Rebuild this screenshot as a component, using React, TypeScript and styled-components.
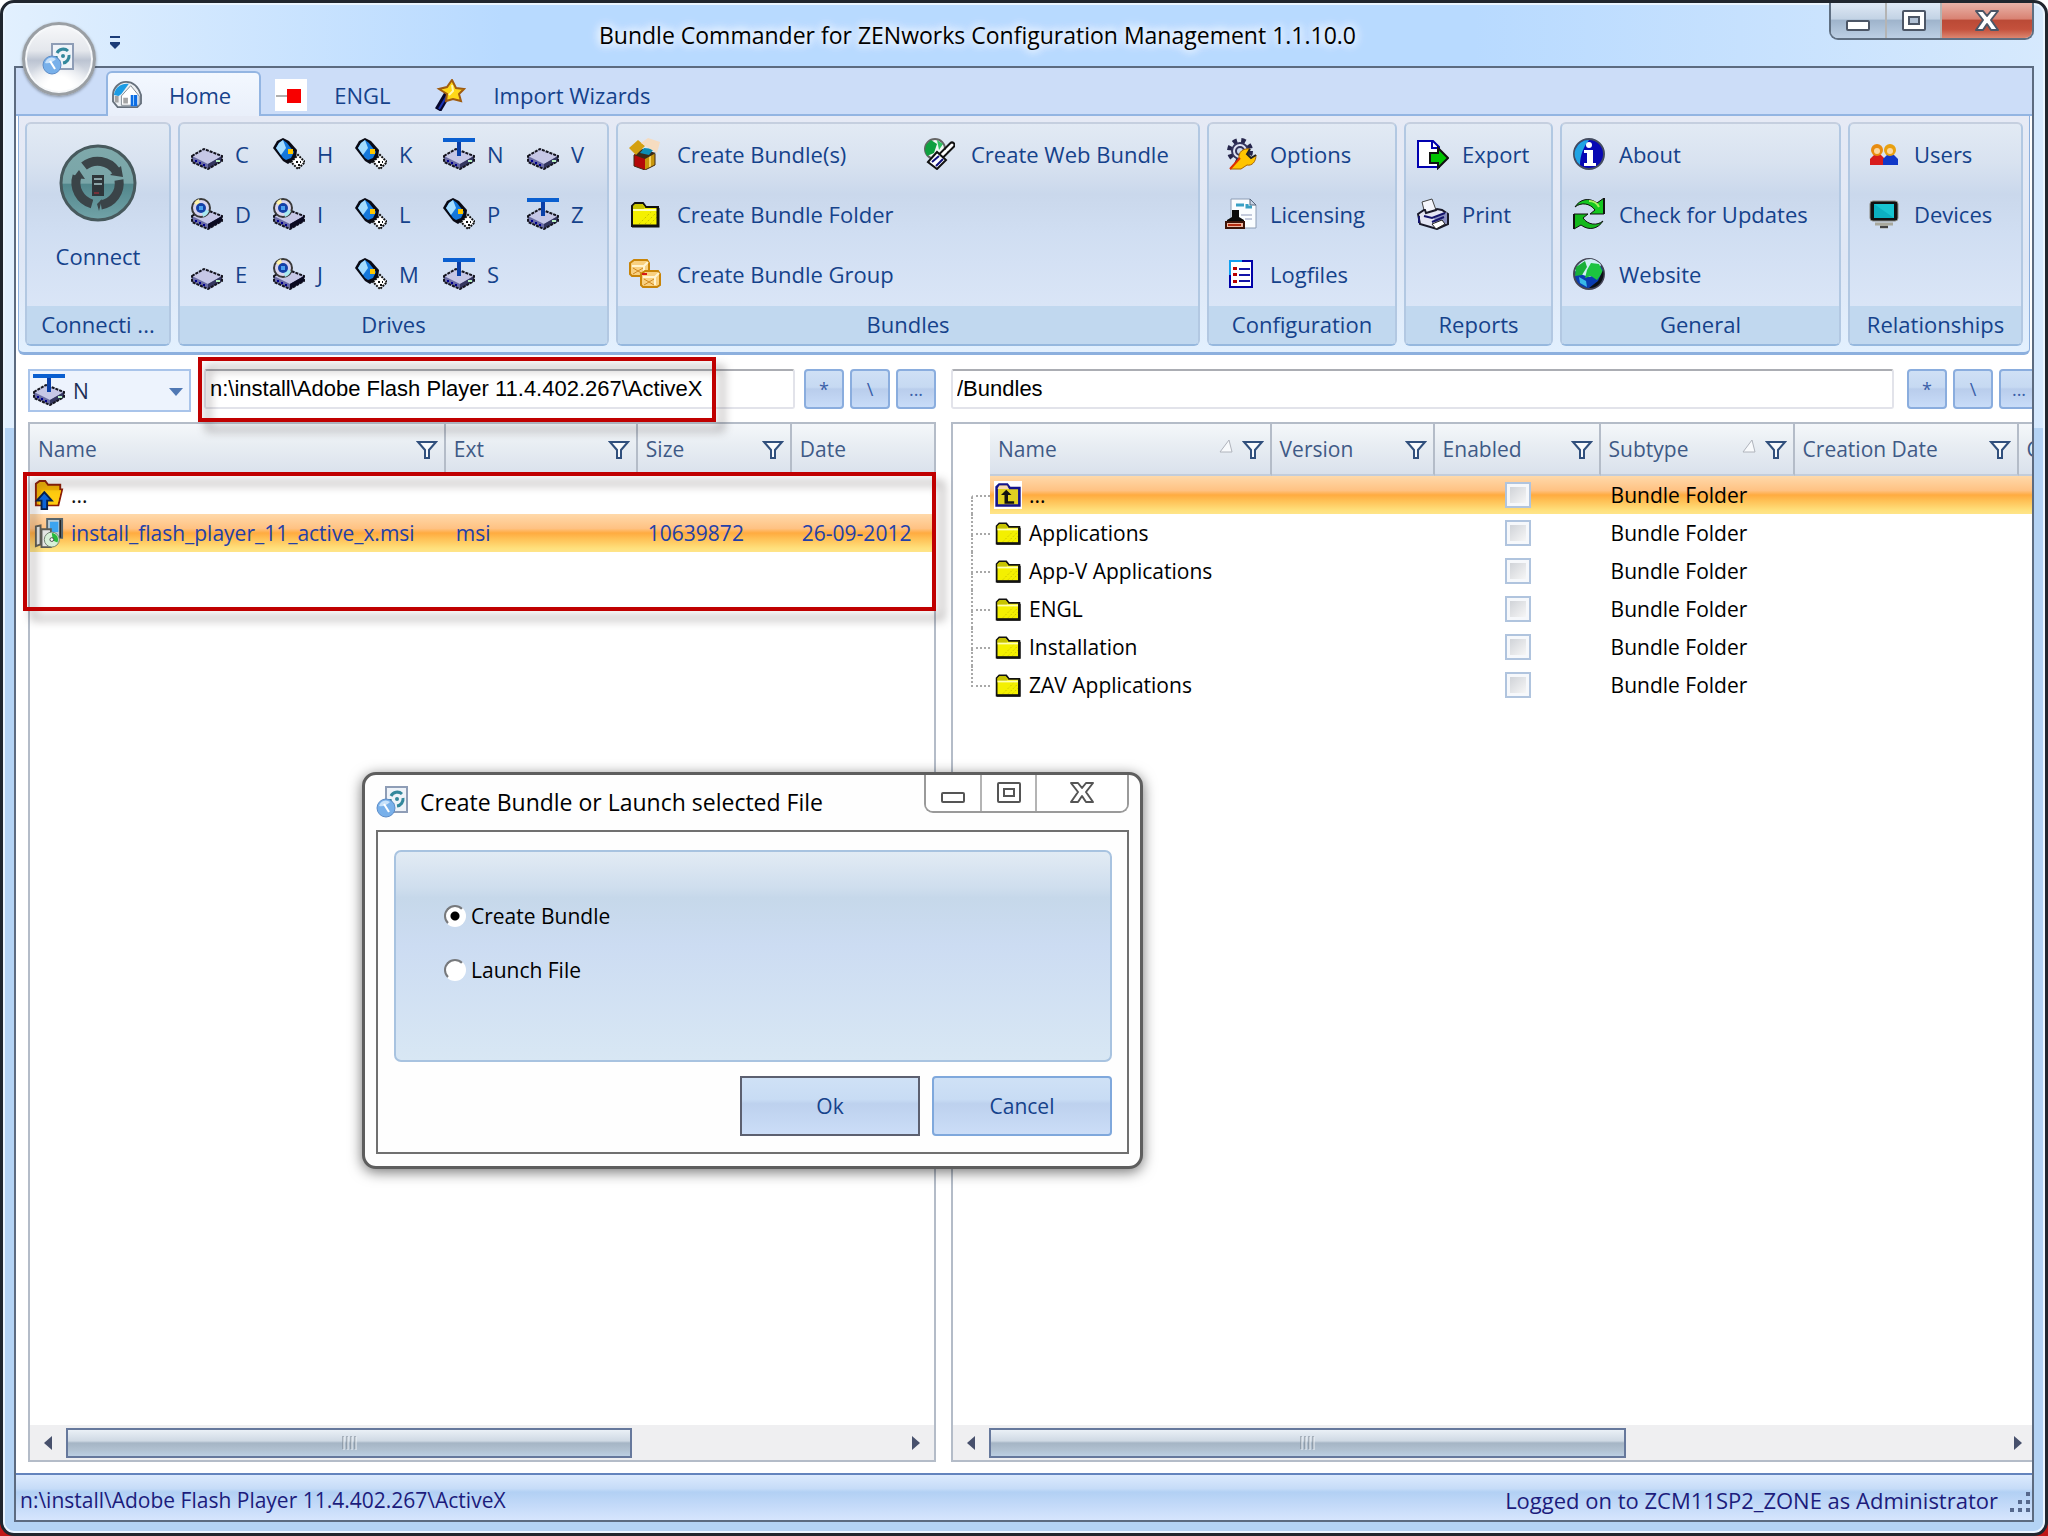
import React from "react";
import styled, { createGlobalStyle, css } from "styled-components";

const INK = "#15428b";
const LINE = "#b4bcc8";

const Global = createGlobalStyle`
  * { box-sizing: border-box; }
  html, body, #root { height: 100%; }
  body {
    margin: 0;
    background: linear-gradient(#ffffff 50%, #c01818 50%);
    font-family: "Open Sans", "Noto Sans", sans-serif;
    font-size: 21px;
    line-height: 28px;
    color: #000;
  }
  button, input, select { font: inherit; color: inherit; margin: 0; }
  button { padding: 0; border: 0; background: none; }
  svg { display: block; flex: none; }
`;

/* ---------- window frame ---------- */

const Frame = styled.div`
  position: relative;
  height: 100vh;
  min-height: 1200px;
  display: flex;
  flex-direction: column;
  padding: 0 11px 11px;
  border: 3px solid #20262e;
  border-radius: 14px;
  overflow: hidden;
  background: linear-gradient(90deg, #e2f0fe 0, #b8daff 500px, #b8daff 72%, #d6e9fd 100%) top / 100% 425px no-repeat, #b4d3f4;
  box-shadow: inset 0 0 0 2px #eaf5ff;
`;

const TitleBar = styled.header`
  height: 63px;
  flex: none;
  display: flex;
  align-items: flex-start;
  padding-left: 94px;
`;

const QuickAccess = styled.button`
  margin-top: 31px;
  height: 16px;
`;

const Title = styled.h1`
  flex: 1;
  margin: 0;
  padding: 16px 0 0 4px;
  text-align: center;
  font-size: 23px;
  font-weight: 400;
  line-height: 32px;
  text-shadow: 0 0 10px #fff, 0 0 10px #fff, 0 0 14px #fff;
  white-space: nowrap;
`;

const Orb = styled.button`
  position: absolute;
  left: 19px;
  top: 19px;
  width: 74px;
  height: 74px;
  border-radius: 50%;
  border: 3px solid #9a9fa4;
  box-shadow: inset 0 0 0 2px #f6f8fa, 0 1px 3px rgba(0, 0, 0, 0.35);
  background: radial-gradient(circle at 50% 95%, #fff 0, #fff 18%, transparent 45%),
    linear-gradient(#f7f8fa 0, #e4e7ec 38%, #bcc4d2 52%, #dfe3ea 75%, #fff 100%);
  display: grid;
  place-items: center;
`;

const Controls = styled.div<{ $light?: boolean }>`
  display: flex;
  height: ${(p) => (p.$light ? 38 : 37)}px;
  border: 2px solid ${(p) => (p.$light ? "#9a9a9a" : "#5f6f82")};
  border-top: 0;
  border-radius: 0 0 9px 9px;
  overflow: hidden;
`;

const ControlButton = styled.button<{ $kind?: "close" | "plain"; $w: number }>`
  width: ${(p) => p.$w}px;
  display: grid;
  place-items: center;
  background: ${(p) =>
    p.$kind === "close"
      ? "linear-gradient(#e9b3a8 0, #d98374 45%, #bb4a36 50%, #c4513c 75%, #dc8670 100%)"
      : p.$kind === "plain"
        ? "#fff"
        : "linear-gradient(#dfe9f5 0, #c3d3e5 45%, #9fb4cc 50%, #bccfe4 100%)"};
  & + & { border-left: 2px solid ${(p) => (p.$kind === "plain" ? "#b4b4b4" : "#76879c")}; }
`;

const Client = styled.div`
  flex: 1;
  min-height: 0;
  display: flex;
  flex-direction: column;
  border: 2px solid #5c6b80;
  background: #fff;
  overflow: hidden;
`;

/* ---------- ribbon ---------- */

const Tabs = styled.nav`
  height: 48px;
  flex: none;
  display: flex;
  align-items: flex-end;
  padding-left: 90px;
  background: #ccddf8;
  box-shadow: inset 0 -2px #93b5e2;
`;

const Tab = styled.button<{ $active?: boolean }>`
  height: 45px;
  display: flex;
  align-items: center;
  gap: 27px;
  padding: 0 28px 0 4px;
  margin-right: 8px;
  font-size: 22px;
  color: ${INK};
  border: 2px solid transparent;
  border-bottom: 0;
  border-radius: 6px 6px 0 0;
  ${(p) =>
    p.$active &&
    css`
      background: linear-gradient(#f3f8ff, #e9effa);
      border-color: #93b5e2;
    `}
`;

const Ribbon = styled.section`
  flex: none;
  display: flex;
  gap: 7px;
  padding: 6px 6px 6px;
  margin: 0 2px;
  border: solid #8db0de;
  border-width: 0 1px 3px;
  border-radius: 0 0 6px 6px;
  background: linear-gradient(#e6eaf5, #dfe7f5 60%, #e2f0fe);
`;

const Group = styled.section<{ $grow: number }>`
  flex: ${(p) => `${p.$grow} 1 ${p.$grow}px`};
  min-width: 0;
  display: flex;
  flex-direction: column;
  border: 2px solid #b2c8e2;
  border-top-color: #c5cfdf;
  border-bottom-color: #96b8de;
  border-radius: 6px;
  overflow: hidden;
  background: linear-gradient(#e2eaf4 0, #d8e2f0 18%, #cad8ec 32%, #d0def2 50%, #dfe9f9 100%);
`;

const GroupBody = styled.div<{ $cols: string; $pad: number }>`
  display: grid;
  grid-template-rows: repeat(3, 60px);
  grid-template-columns: ${(p) => p.$cols};
  grid-auto-flow: column;
  padding: 0 0 2px ${(p) => p.$pad}px;
`;

const GroupLabel = styled.h2`
  margin: 0;
  height: 38px;
  background: #c1d8ef;
  color: ${INK};
  text-align: center;
  font-size: 22px;
  font-weight: 400;
  line-height: 36px;
  white-space: nowrap;
`;

const Action = styled.button<{ $gap: number }>`
  display: flex;
  align-items: center;
  gap: ${(p) => p.$gap}px;
  color: ${INK};
  font-size: 22px;
  line-height: 30px;
  white-space: nowrap;
`;

const ConnectAction = styled.button`
  height: 182px;
  display: flex;
  flex-direction: column;
  align-items: center;
  gap: 18px;
  padding-top: 20px;
  color: ${INK};
  font-size: 22px;
  line-height: 32px;
`;

/* ---------- panes ---------- */

const Panes = styled.main`
  flex: 1;
  min-height: 0;
  display: flex;
  gap: 15px;
  padding: 0 0 11px 12px;
`;

const Pane = styled.section<{ $grow: number }>`
  position: relative;
  flex: ${(p) => p.$grow} 1 0;
  min-width: 0;
  display: flex;
  flex-direction: column;
`;

const ClippedPane = styled(Pane)`
  overflow: hidden;
`;

const AddressBar = styled.div<{ $overrun?: boolean }>`
  height: 67px;
  flex: none;
  display: flex;
  align-items: flex-start;
  padding-top: 14px;
  margin-right: ${(p) => (p.$overrun ? -7 : 0)}px;
`;

const DriveBox = styled.label`
  position: relative;
  width: 163px;
  height: 43px;
  margin-right: 13px;
  svg { position: absolute; top: 5px; left: 5px; pointer-events: none; }
  svg + svg { left: auto; right: 7px; top: 15px; }
`;

const DriveSelect = styled.select`
  width: 100%;
  height: 100%;
  appearance: none;
  border: 2px solid #a9c4ea;
  background: #edf3fd;
  padding: 0 0 0 43px;
  color: #1e2f56;
`;

const Address = styled.input`
  flex: 1;
  min-width: 0;
  height: 40px;
  padding: 0 4px;
  border: 2px solid #e2e3ea;
  border-top-color: #abadb3;
  border-radius: 3px;
  background: #fff;
  font-family: "Liberation Sans", Arial, sans-serif;
  font-size: 22px;
`;

const PathButtons = styled.div<{ $before: number }>`
  display: flex;
  gap: 6px;
  margin-left: ${(p) => p.$before}px;
`;

const PathButton = styled.button`
  width: 40px;
  height: 40px;
  flex: none;
  border: 2px solid #8aadde;
  border-radius: 4px;
  background: linear-gradient(#cfe0f5 0, #c6d9f2 45%, #b9cdec 50%, #c8dcf8 100%);
  color: #3a5fa8;
  font-size: 18px;
  line-height: 28px;
`;

const GridArea = styled.div<{ $overrun?: boolean }>`
  flex: 1;
  min-height: 0;
  display: flex;
  flex-direction: column;
  border: 2px solid ${LINE};
  margin-right: ${(p) => (p.$overrun ? -6 : 0)}px;
`;

const TableWrap = styled.div`
  flex: 1;
  min-height: 0;
  overflow: hidden;
`;

const Table = styled.table`
  width: 100%;
  table-layout: fixed;
  border-collapse: separate;
  border-spacing: 0;
`;

const Th = styled.th<{ $blank?: boolean }>`
  height: 52px;
  padding: 0 6px 0 8px;
  font-weight: 400;
  text-align: left;
  white-space: nowrap;
  overflow: hidden;
  color: #3f5a86;
  ${(p) =>
    !p.$blank &&
    css`
      background: linear-gradient(#f4f7fa 0, #e9eef3 40%, #dae1ec 100%);
      border-right: 2px solid ${LINE};
      border-bottom: 2px solid #c3cddb;
    `}
  &:last-child { border-right: 0; }
`;

const ThInner = styled.span`
  display: flex;
  align-items: center;
  gap: 8px;
  height: 28px;
  line-height: 28px;
`;

const Spacer = styled.span`
  flex: 1;
`;

const Row = styled.tr<{ $selected?: boolean; $ink: string }>`
  color: ${(p) => p.$ink};
  td { height: 38px; }
  ${(p) =>
    p.$selected &&
    css`
      td:not([data-tree]) {
        background: linear-gradient(#ffd9aa 0, #ffc283 38%, #ffab40 50%, #ffc055 65%, #ffe07c 90%, #ffe58a 100%);
      }
    `}
`;

const Td = styled.td`
  padding: 0 10px;
  white-space: nowrap;
`;

const NameTd = styled(Td)`
  padding: 0 0 0 4px;
`;

const NameCell = styled.span`
  display: flex;
  align-items: center;
  gap: 7px;
`;

const TreeTd = styled.td`
  padding: 0 0 0 18px;
`;

const Branch = styled.span<{ $first?: boolean; $last?: boolean }>`
  display: grid;
  grid-template-rows: 21px 17px;
  &::before {
    content: "";
    border-bottom: 2px dotted #a8a8a8;
    border-left: 2px dotted ${(p) => (p.$first ? "transparent" : "#a8a8a8")};
  }
  &::after {
    content: "";
    border-left: 2px dotted ${(p) => (p.$last ? "transparent" : "#a8a8a8")};
  }
`;

const Check = styled.input`
  appearance: none;
  display: block;
  width: 26px;
  height: 26px;
  margin: 0 auto;
  border: 2px solid #b0c4de;
  background: linear-gradient(135deg, #d0d3d8, #f6f6f6) content-box, #f6f8fb;
  padding: 3px;
`;

const ScrollRow = styled.div`
  height: 35px;
  flex: none;
  display: flex;
  align-items: center;
  background: #efeff1;
`;

const ScrollArrow = styled.button`
  width: 36px;
  height: 100%;
  flex: none;
  display: grid;
  place-items: center;
`;

const Track = styled.div`
  flex: 1;
`;

const Thumb = styled.div`
  height: 30px;
  display: grid;
  place-items: center;
  border: 2px solid #66789c;
  background: linear-gradient(#eaf0f6 0, #cfd9e4 42%, #a5b5c5 50%, #b0c0d0 75%, #bccfe2 100%);
`;

const StatusBar = styled.footer`
  height: 47px;
  flex: none;
  display: flex;
  align-items: center;
  justify-content: space-between;
  padding: 4px 2px 0 4px;
  border-top: 2px solid #6484bd;
  background: linear-gradient(#dceafd 0, #c6dcf8 30%, #b2d0f4 38%, #c2d9f8 65%, #d6e5fd 100%);
  color: #1c1c7c;
`;

const StatusEnd = styled.span`
  display: flex;
  align-items: flex-end;
  gap: 12px;
  font-size: 22px;
`;

const Callout = styled.div<{ $l: number; $t: number; $r?: number; $w?: number; $h: number }>`
  position: absolute;
  z-index: 2;
  left: ${(p) => p.$l}px;
  top: ${(p) => p.$t}px;
  ${(p) => (p.$w ? `width: ${p.$w}px;` : `right: ${p.$r}px;`)}
  height: ${(p) => p.$h}px;
  border: 4px solid #c00000;
  filter: drop-shadow(8px 9px 5px rgba(60, 50, 50, 0.45));
  pointer-events: none;
`;

/* ---------- dialog ---------- */

const Dialog = styled.form`
  position: absolute;
  left: 359px;
  top: 769px;
  width: 781px;
  z-index: 3;
  padding: 0 11px 12px;
  border: 3px solid #5e5e5e;
  border-radius: 14px;
  background: #fefefe;
  box-shadow: 0 3px 14px rgba(0, 0, 0, 0.55);
`;

const DialogHead = styled.div`
  height: 55px;
  display: flex;
  align-items: flex-start;
`;

const DialogTitle = styled.h2`
  flex: 1;
  margin: 0;
  padding-top: 10px;
  display: flex;
  align-items: center;
  gap: 10px;
  font-size: 23px;
  font-weight: 400;
  line-height: 32px;
`;

const DialogBody = styled.div`
  border: 2px solid #707070;
  padding: 18px 15px 16px 16px;
`;

const Choices = styled.fieldset`
  margin: 0;
  height: 212px;
  padding: 48px 0 0 48px;
  display: flex;
  flex-direction: column;
  gap: 22px;
  border: 2px solid #a8c3e0;
  border-radius: 7px;
  background: linear-gradient(#e2ebf4 0, #cfdeee 17%, #c6d8ea 22%, #ccdcf2 45%, #d8e7f4 100%);
`;

const Choice = styled.label`
  display: flex;
  align-items: center;
  gap: 5px;
  height: 32px;
  line-height: 32px;
`;

const Radio = styled.input`
  appearance: none;
  width: 22px;
  height: 22px;
  border-radius: 50%;
  border: 2px solid;
  border-color: #77797c #fff #fff #77797c;
  background: #fff;
  &:checked { background: radial-gradient(circle, #000 0 4px, #fff 5px); }
`;

const DialogActions = styled.div`
  display: flex;
  justify-content: flex-end;
  gap: 12px;
  padding-top: 14px;
`;

const DialogButton = styled.button<{ $default?: boolean }>`
  width: 180px;
  height: 60px;
  border: 2px solid ${(p) => (p.$default ? "#5c6070" : "#7fa8dc")};
  border-radius: ${(p) => (p.$default ? 0 : 4)}px;
  background: linear-gradient(#cfe1f6 0, #c8dcf4 38%, #bdd1ee 46%, #cbddf7 100%);
  color: ${INK};
`;

/* ---------- icons ---------- */

type IconProps = { size?: number };

const Svg = ({ size = 32, children }: IconProps & { children: React.ReactNode }) => (
  <svg width={size} height={size} viewBox="0 0 32 32" aria-hidden="true">
    {children}
  </svg>
);

const DiskShape = () => (
  <g>
    <path d="M1 18 13 11 31 18v5L17 31 1 24z" fill="#6a6ca4" />
    <path d="M1 18 13 11 31 18 17 26z" fill="#c6c7e6" />
    <path d="M17 26 31 18v5l-14 8z" fill="#34365e" />
    <path d="M1 18 13 11 31 18v5L17 31 1 24z" fill="none" stroke="#15151f" strokeWidth="2" strokeDasharray="3 1" />
    <path d="M5 22v2M9 24v2M13 26v2" stroke="#00008c" strokeWidth="2" />
    <path d="M25 23h4" stroke="#b8f0c0" strokeWidth="2" />
  </g>
);

const HardDisk = () => (
  <Svg>
    <DiskShape />
  </Svg>
);

const NetDrive = () => (
  <Svg>
    <DiskShape />
    <path d="M0 2h32" stroke="#0a5fd0" strokeWidth="4" />
    <path d="M16 4v14" stroke="#0a3fa8" strokeWidth="4" />
  </Svg>
);

const CdDrive = () => (
  <Svg>
    <DiskShape />
    <path d="m17 26 14-8v5l-14 8z" fill="#0a0a20" />
    <circle cx="10" cy="10" r="9" fill="#d8d4ee" stroke="#3a3a3a" strokeWidth="2" />
    <path d="M10 10 3 5a9 9 0 0 1 5-4z" fill="#fff3a8" />
    <path d="m10 10 8 3a9 9 0 0 1-6 6z" fill="#a8e8f0" />
    <circle cx="10" cy="10" r="5" fill="#1440a8" />
    <path d="M8 8h4v4H8z" fill="#4aa0f0" />
  </Svg>
);

const UsbDrive = () => (
  <Svg>
    <path d="M0 10 4 3l6-3 6 3 8 9-1 8-8 6-5-3z" fill="#0a0a14" />
    <path d="M3 10 6 5l4-3 4 3 7 9-3 6-5 2-3-2z" fill="#1478dc" />
    <path d="M3 10 6 5l4-3 3 8-5 7z" fill="#a4dcff" />
    <path d="M15 11h5v5h-5z" fill="#ffc800" />
    <path d="m18 24 7-7 7 7-7 7z" fill="#fff" stroke="#111" strokeWidth="2" strokeDasharray="2 1" />
    <path d="M23 24h2m2 0h1m-3 3h2" stroke="#111" strokeWidth="2" />
  </Svg>
);

const BoxOpen = () => (
  <Svg>
    <path d="M5 16v12l11 4V20z" fill="#b40808" />
    <path d="m16 20 10-5v12l-10 5z" fill="#c8960c" />
    <path d="M21 18v11" stroke="#f4d060" strokeWidth="2" />
    <path d="m5 17 8-6 14 4-11 6z" fill="#3a2a18" />
    <path d="m11 15 4-5 10 1-5 6z" fill="#0c8cb4" />
    <path d="M0 10 9 2l7 6-9 9z" fill="#d4a010" />
    <path d="m12 5 7-5 12 4-3 11-10-6z" fill="#f6dcc0" />
    <path d="M5 17v11l11 4 10-5V16" fill="none" stroke="#442a10" strokeWidth="1" />
  </Svg>
);

const Folder = ({ size = 32 }: IconProps) => (
  <Svg size={size}>
    <path d="M3 28V8l3-3h8l3 4h12v19z" fill="#f4f000" stroke="#111" strokeWidth="2" />
    <path d="M4 8l2-2h7l3 3-2 3H4z" fill="#c8c400" />
    <path d="M4 12h24" stroke="#ffffb0" strokeWidth="2" />
    <path d="m10 26 12-12m-6 12 12-12m-7 12 7-7" stroke="#c8c000" strokeWidth="1" strokeDasharray="2 2" />
    <path d="M29 10v18H3" fill="none" stroke="#111" strokeWidth="3" />
  </Svg>
);

const Parcels = () => (
  <Svg>
    {[0, 1].map((i) => (
      <g key={i} transform={`translate(${i * 11} ${i * 11})`}>
        <path d="m1 5 4-3h13l2 3v11l-3 2H3l-2-2z" fill="#f8d080" stroke="#c88408" strokeWidth="2" />
        <path d="M3 8h12l4-4M15 8v8" fill="none" stroke="#fff4d0" strokeWidth="2" />
        <path d="m4 10 10 6m0-6L4 16" stroke="#d08820" strokeWidth="1" />
      </g>
    ))}
    <path d="M13 16h5" stroke="#d81818" strokeWidth="2" />
  </Svg>
);

const WebPen = () => (
  <Svg>
    <circle cx="12" cy="11" r="10" fill="#f2f8f4" stroke="#666" strokeWidth="2" />
    <path d="m3 7 5-5 6 4-3 9-7 3-2-5z" fill="#10a040" />
    <path d="m14 2 6 4-4 6z" fill="#30c060" />
    <path d="M29 7 15 21" stroke="#111" strokeWidth="7" strokeLinecap="round" />
    <path d="M29 7 15 21" stroke="#fff" strokeWidth="3" strokeLinecap="round" strokeDasharray="7 2" />
    <path d="m5 24 9-10 9 8-9 9z" fill="#fff" stroke="#111" strokeWidth="2" />
    <path d="m9 24 7-6M13 28l7-7" stroke="#10107c" strokeWidth="2" />
  </Svg>
);

const Gear = () => (
  <Svg>
    <circle cx="15" cy="13" r="10" fill="none" stroke="#26264c" strokeWidth="6" strokeDasharray="4 4" />
    <circle cx="15" cy="13" r="8" fill="#dfe3f4" stroke="#34345c" strokeWidth="2" />
    <circle cx="15" cy="13" r="4" fill="#cdd9ea" stroke="#34345c" strokeWidth="2" />
    <path d="m5 31 9-10c-1-7 4-11 11-10l-3 5 4 4 5-3c0 7-4 11-9 10l-6 4z" fill="#ffc400" stroke="#a86400" strokeWidth="1" />
    <path d="m5 31 10-11" stroke="#e03000" strokeWidth="2" />
    <path d="M25 11l-3 5 4 4 5-3" fill="none" stroke="#222" strokeWidth="2" />
  </Svg>
);

const License = () => (
  <Svg>
    <path d="M6 1h19l6 6v23H6z" fill="#fafdff" stroke="#8c9cb4" strokeWidth="1" />
    <path d="M25 1v6h6z" fill="#c8d4e4" stroke="#55657c" strokeWidth="1" />
    <path d="M11 7h8M22 6v3h5" fill="none" stroke="#38a0c4" strokeWidth="3" />
    <path d="M16 17h11M20 21h7" stroke="#8c98b8" strokeWidth="1" />
    <path d="M7 12h7v7l5 3v2H2v-2l5-3z" fill="#0a0a0a" />
    <path d="M1 24h18v6H1z" fill="#f0b8a0" stroke="#3c1408" strokeWidth="2" />
    <path d="M3 27h13" stroke="#b42c10" strokeWidth="2" />
  </Svg>
);

const LogList = () => (
  <Svg>
    <path d="M5 3h22v26H5z" fill="#fff" stroke="#0000a8" strokeWidth="2" />
    <path d="M5 17V3h12" fill="none" stroke="#10a0f0" strokeWidth="2" />
    <path d="M8 9h4v3H8zM8 15h4v3H8zM8 22h4v3H8z" fill="#b80000" />
    <path d="M14 11h11M14 17h11M14 23h11" stroke="#1414a8" strokeWidth="2" />
  </Svg>
);

const ExportIcon = () => (
  <Svg>
    <path d="M1 3h15l6 6v20H1z" fill="#fff" stroke="#0000b0" strokeWidth="2" />
    <path d="M15 3v7h7" fill="none" stroke="#0000b0" strokeWidth="2" />
    <path d="M13 15h8v-5l10 10-10 10v-5h-8z" fill="#00c400" stroke="#111" strokeWidth="2" />
  </Svg>
);

const Printer = () => (
  <Svg>
    <path d="M5 4 15 1l4 11-11 4z" fill="#f4f6fc" stroke="#444" strokeWidth="1" />
    <path d="m1 16 6-4h1l1 3 10-3 1-1 5 1 6 4v10l-11 5L3 26z" fill="#e4e6f4" stroke="#1a1a2a" strokeWidth="2" />
    <path d="m17 20 13-6v11l-10 5z" fill="#8a90c0" />
    <path d="M2 18v7M7 18l8 2 13-5M15 24l12-5" stroke="#14146c" strokeWidth="2" fill="none" />
    <path d="m15 26 10-4 3 4-9 5z" fill="#fff" stroke="#222" strokeWidth="1" />
  </Svg>
);

const Info = () => (
  <Svg>
    <circle cx="16" cy="16" r="15" fill="#0808b4" stroke="#444c60" strokeWidth="2" />
    <path d="M16 2a14 14 0 0 0-9 25c0-10 4-19 9-25z" fill="#20a4e4" />
    <circle cx="16" cy="7" r="3" fill="#fff" />
    <path d="M11 12h9v13h3v3H11v-3h3V15h-3z" fill="#fff" />
  </Svg>
);

const Refresh = () => (
  <Svg>
    <path d="M2 9C7 1 16-1 24 5l7-5v16H17l5-4C17 5 8 4 2 9z" fill="#14c820" stroke="#111" strokeWidth="1" />
    <path d="M30 23c-5 8-14 10-22 4l-7 4V16h14l-5 4c5 7 14 8 20 3z" fill="#14b81c" stroke="#111" strokeWidth="1" />
    <path d="M31 0v16M1 31V16" stroke="#111" strokeWidth="2" />
    <path d="M16 3c4 0 8 2 10 6" fill="none" stroke="#a8f060" strokeWidth="2" />
  </Svg>
);

const Globe = () => (
  <Svg>
    <circle cx="16" cy="16" r="15" fill="#0a3cb0" stroke="#445" strokeWidth="2" />
    <path d="M2 13C5 4 12 1 18 1c5 1 9 4 10 6l-6 10-6 2-6-2z" fill="#cfeef4" />
    <path d="M3 9l9-6 2 6-5 8-7 1z" fill="#18b038" />
    <path d="m18 5 8 1 4 8-6 8-6-4-6 2 2-8z" fill="#1cc440" />
    <path d="M30 12c3 10-6 19-14 18l9-7z" fill="#0c1014" />
    <path d="m6 19 7 4 1 6-7-4z" fill="#38b8e8" />
  </Svg>
);

const Users = () => (
  <Svg>
    {[
      { x: 9, hair: "#e88c10", body: "#d81c1c" },
      { x: 22, hair: "#e8a010", body: "#1038c8" },
    ].map(({ x, hair, body }) => (
      <g key={x}>
        <path d={`M${x - 7} 27v-6l4-4h7l4 4v6z`} fill={body} />
        <circle cx={x} cy="12" r="6" fill={hair} />
        <circle cx={x} cy="13" r="3" fill="#fcd8a0" />
      </g>
    ))}
  </Svg>
);

const Monitor = () => (
  <Svg>
    <rect x="2" y="3" width="28" height="20" rx="3" fill="#111" stroke="#8c8c84" strokeWidth="1" />
    <path d="M6 6h20v14H6z" fill="#18c4d0" />
    <path d="m6 6 20 14H6z" fill="#0cb0c0" />
    <path d="M7 26h18M12 29h8" stroke="#a8a89c" strokeWidth="3" />
    <path d="M12 29h8" stroke="#444" strokeWidth="2" />
  </Svg>
);

const House = () => (
  <svg width="30" height="28" viewBox="0 0 32 30" aria-hidden="true">
    <path d="M1 15C1 8 7 1 15 1s13 5 16 14v9l-4 4H6l-5-6z" fill="#eef1f4" stroke="#66707c" strokeWidth="2" />
    <path d="M2 15C3 8 8 2 18 3l-8 11-3 2z" fill="#1c9ce4" />
    <path d="M10 16 20 5l9 11v10H10z" fill="#fff" stroke="#7c848c" strokeWidth="1" />
    <path d="M12 18h5v6h-5zM3 16h4v7H3z" fill="#a4a4a4" />
    <path d="M20 15h7v12h-7z" fill="#0c6ce4" />
    <path d="M23 15v11" stroke="#9cd4ff" strokeWidth="1" />
  </svg>
);

const EnglLogo = () => (
  <svg width="32" height="32" viewBox="0 0 32 32" aria-hidden="true">
    <path d="M0 0h32v32H0z" fill="#fff" />
    <path d="M1 17h12" stroke="#b0b0b0" strokeWidth="2" />
    <path d="M12 10h14v14H12z" fill="#f80000" />
  </svg>
);

const Wand = () => (
  <Svg>
    <path d="M4 31 14 14" stroke="#06062c" strokeWidth="7" />
    <path d="M5 30 14 15" stroke="#1c34b4" strokeWidth="2" />
    <path d="m18 1 4 8 8 1-5 5 2 7-8-2-7 2 1-7-8-5 8-2z" fill="#ffd818" stroke="#a05c10" strokeWidth="2" />
    <path d="m18 6 1 6-4 4" stroke="#fff8b0" strokeWidth="2" fill="none" />
  </Svg>
);

const AppIcon = () => (
  <svg width="34" height="34" viewBox="0 0 34 34" aria-hidden="true">
    <path d="M10 2h21v25H10z" fill="#eef3f9" stroke="#8e9db6" strokeWidth="2" />
    <path d="M15 11a7 7 0 0 1 11-2M27 13a7 7 0 0 1-6 8M14 14a7 7 0 0 0 4 6" fill="none" stroke="#33889c" strokeWidth="3" />
    <circle cx="21" cy="14" r="2" fill="#33889c" />
    <circle cx="10" cy="23" r="9" fill="#78b0ea" stroke="#5c8cc8" strokeWidth="1" />
    <path d="M3 21a7 7 0 0 1 11-4c-3 3-7 5-11 4z" fill="#c8e2fb" />
    <path d="m8 19 5 8" stroke="#fff" strokeWidth="2" />
  </svg>
);

const ConnectIcon = () => (
  <svg width="78" height="78" viewBox="0 0 78 78" aria-hidden="true">
    <defs>
      <linearGradient id="teal" x1="0" y1="0" x2="0" y2="1">
        <stop offset="0" stopColor="#7fa9ab" />
        <stop offset="0.5" stopColor="#79a5a8" />
        <stop offset="0.52" stopColor="#52878c" />
        <stop offset="1" stopColor="#72a3a8" />
      </linearGradient>
    </defs>
    <circle cx="39" cy="39" r="37" fill="url(#teal)" stroke="#47595d" strokeWidth="3" />
    <g fill="none" stroke="#3a4448" strokeWidth="9">
      <path d="M25 22a22 22 0 0 1 32 5" />
      <path d="M60 36a22 22 0 0 1-18 25" />
      <path d="M18 32a22 22 0 0 0 15 28" />
    </g>
    <path d="m62 22 2 11-13-2zM14 34l6-8 6 9zM43 55l-3 12-2-7z" fill="#3a4448" />
    <path d="M33 31h12v21H33z" fill="#2e363a" />
    <path d="M35 35h8M35 40h8" stroke="#8ba4a8" strokeWidth="2" />
    <path d="M35 49h5" stroke="#74323a" strokeWidth="2" />
  </svg>
);

const FolderUp = () => (
  <Svg size={30}>
    <path d="M2 27V4l4-3h6l3 4h13v5h2l-4 17z" fill="#f4b400" stroke="#8c1c04" strokeWidth="2" />
    <path d="M8 11h21l-4 15H5z" fill="#ffcc10" />
    <path d="m11 13 8 9h-5v9H8v-9H3z" fill="#0c64d8" stroke="#06204c" strokeWidth="2" />
  </Svg>
);

const MsiFile = () => (
  <Svg size={30}>
    <path d="M14 1h16v20H14z" fill="#b8ccd8" stroke="#56646c" strokeWidth="2" />
    <path d="M17 4h9v11h-9z" fill="#3ca4f0" />
    <path d="M28 2v19" stroke="#222" strokeWidth="2" />
    <path d="M2 9l5-1v20l-5 2zM8 12h10v19H8z" fill="#e4e6e4" stroke="#5c5c54" strokeWidth="2" />
    <circle cx="19" cy="23" r="8" fill="#d8f0d8" stroke="#6c7c6c" strokeWidth="1" />
    <path d="M19 16a7 7 0 0 1 6 10l-5-2z" fill="#28b83c" />
    <circle cx="19" cy="23" r="2" fill="#fff" stroke="#444" />
  </Svg>
);

const ParentFolder = () => (
  <Svg size={28}>
    <path d="M0 0h32v32H0z" fill="#fff" />
    <path d="M3 28V7l3-3h9l3 4h11v20z" fill="#e0d020" stroke="#14148c" strokeWidth="3" />
    <path d="M6 5h9l2 4H4z" fill="#f8d8b0" />
    <path d="m14 10 6 6h-4v7h7v3H12V16H8z" fill="#111" />
  </Svg>
);

const Funnel = () => (
  <svg width="22" height="19" viewBox="0 0 22 19" aria-hidden="true">
    <path d="M2 2h18l-7 8v8H9v-8z" fill="#f8fafc" stroke="#304f7c" strokeWidth="2" />
  </svg>
);

const SortMark = () => (
  <svg width="16" height="28" viewBox="0 0 16 28" aria-hidden="true">
    <path d="M2 17 11 5l3 12z" fill="#f8fafc" stroke="#b0b4bc" strokeWidth="1" />
  </svg>
);

const Caret = ({ dir }: { dir: "left" | "right" | "down" }) => (
  <svg width="16" height="16" viewBox="0 0 16 16" aria-hidden="true">
    <path
      d={dir === "left" ? "M12 1v14L4 8z" : dir === "right" ? "M4 1v14l8-7z" : "M1 4h14l-7 8z"}
      fill={dir === "down" ? "#5078b4" : "#47506c"}
    />
  </svg>
);

const WindowGlyphs = ({ light }: { light?: boolean }) => {
  const kind = light ? ("plain" as const) : undefined;
  const edge = light ? "#555" : "#4c5666";
  return (
    <Controls $light={light}>
      <ControlButton type="button" $kind={kind} $w={54} aria-label="Minimize">
        <svg width="26" height="24" viewBox="0 0 26 24">
          <rect x="2" y="12" width="22" height="9" rx="1" fill="#fff" stroke={edge} strokeWidth="2" />
        </svg>
      </ControlButton>
      <ControlButton type="button" $kind={kind} $w={55} aria-label="Maximize">
        <svg width="26" height="24" viewBox="0 0 26 24">
          <rect x="2" y="2" width="22" height="19" rx="1" fill="#fff" stroke={edge} strokeWidth="2" />
          <rect x="8" y="8" width="10" height="7" fill={light ? "#fff" : "#b0c0d4"} stroke={edge} strokeWidth="2" />
        </svg>
      </ControlButton>
      <ControlButton type="button" $kind={light ? "plain" : "close"} $w={92} aria-label="Close">
        <svg width="26" height="24" viewBox="0 0 26 24">
          <path
            d="M2 2h7l4 5 4-5h7l-7 9 7 10h-7l-4-6-4 6H2l7-10z"
            fill="#fff"
            stroke={edge}
            strokeWidth="2"
            strokeLinejoin="round"
          />
        </svg>
      </ControlButton>
    </Controls>
  );
};

/* ---------- data ---------- */

type Item = { icon: React.ReactNode; text: string };
type GroupData = { label: string; grow: number; cols: string; pad: number; gap: number; columns: Item[][] };

const hd = <HardDisk />;
const cd = <CdDrive />;
const usb = <UsbDrive />;
const net = <NetDrive />;

const groups: GroupData[] = [
  {
    label: "Drives",
    grow: 431,
    cols: "82px 82px 88px 84px 1fr",
    pad: 11,
    gap: 12,
    columns: [
      [{ icon: hd, text: "C" }, { icon: cd, text: "D" }, { icon: hd, text: "E" }],
      [{ icon: usb, text: "H" }, { icon: cd, text: "I" }, { icon: cd, text: "J" }],
      [{ icon: usb, text: "K" }, { icon: usb, text: "L" }, { icon: usb, text: "M" }],
      [{ icon: net, text: "N" }, { icon: usb, text: "P" }, { icon: net, text: "S" }],
      [{ icon: hd, text: "V" }, { icon: net, text: "Z" }],
    ],
  },
  {
    label: "Bundles",
    grow: 584,
    cols: "294px 1fr",
    pad: 11,
    gap: 16,
    columns: [
      [
        { icon: <BoxOpen />, text: "Create Bundle(s)" },
        { icon: <Folder />, text: "Create Bundle Folder" },
        { icon: <Parcels />, text: "Create Bundle Group" },
      ],
      [{ icon: <WebPen />, text: "Create Web Bundle" }],
    ],
  },
  {
    label: "Configuration",
    grow: 190,
    cols: "1fr",
    pad: 16,
    gap: 13,
    columns: [
      [
        { icon: <Gear />, text: "Options" },
        { icon: <License />, text: "Licensing" },
        { icon: <LogList />, text: "Logfiles" },
      ],
    ],
  },
  {
    label: "Reports",
    grow: 149,
    cols: "1fr",
    pad: 11,
    gap: 13,
    columns: [[{ icon: <ExportIcon />, text: "Export" }, { icon: <Printer />, text: "Print" }]],
  },
  {
    label: "General",
    grow: 281,
    cols: "1fr",
    pad: 11,
    gap: 14,
    columns: [
      [
        { icon: <Info />, text: "About" },
        { icon: <Refresh />, text: "Check for Updates" },
        { icon: <Globe />, text: "Website" },
      ],
    ],
  },
  {
    label: "Relationships",
    grow: 175,
    cols: "1fr",
    pad: 18,
    gap: 14,
    columns: [[{ icon: <Users />, text: "Users" }, { icon: <Monitor />, text: "Devices" }]],
  },
];

const bundleRows = ["...", "Applications", "App-V Applications", "ENGL", "Installation", "ZAV Applications"];

const RibbonGroup = ({ group }: { group: GroupData }) => (
  <Group $grow={group.grow}>
    <GroupBody $cols={group.cols} $pad={group.pad}>
      {group.columns.map((col, c) =>
        col.map((item, r) => (
          <Action key={item.text} type="button" $gap={group.gap} style={{ gridColumn: c + 1, gridRow: r + 1 }}>
            {item.icon}
            {item.text}
          </Action>
        ))
      )}
    </GroupBody>
    <GroupLabel>{group.label}</GroupLabel>
  </Group>
);

const HeadCell = ({ text, sort, filter = true }: { text: string; sort?: boolean; filter?: boolean }) => (
  <Th scope="col">
    <ThInner>
      {text}
      <Spacer />
      {sort && <SortMark />}
      {filter && <Funnel />}
    </ThInner>
  </Th>
);

const PathTools = ({ before }: { before: number }) => (
  <PathButtons $before={before}>
    <PathButton type="button">*</PathButton>
    <PathButton type="button">\</PathButton>
    <PathButton type="button">...</PathButton>
  </PathButtons>
);

const ScrollBar = ({ percent }: { percent: number }) => (
  <ScrollRow>
    <ScrollArrow type="button" aria-label="Scroll left">
      <Caret dir="left" />
    </ScrollArrow>
    <Track>
      <Thumb style={{ width: `${percent}%` }}>
        <svg width="16" height="14" viewBox="0 0 16 14" aria-hidden="true">
          <path d="M2 0v13M6 0v13M10 0v13M14 0v13" stroke="#75808c" strokeWidth="1" />
          <path d="M3 1v13M7 1v13M11 1v13M15 1v13" stroke="#f0f4f8" strokeWidth="1" />
        </svg>
      </Thumb>
    </Track>
    <ScrollArrow type="button" aria-label="Scroll right">
      <Caret dir="right" />
    </ScrollArrow>
  </ScrollRow>
);

export default function App() {
  return (
    <>
      <Global />
      <Frame>
        <TitleBar>
          <QuickAccess type="button" aria-label="Customize quick access">
            <svg width="14" height="16" viewBox="0 0 14 16">
              <path d="M2 3h10" stroke="#1c3c78" strokeWidth="2" />
              <path d="M2 8h10v2l-5 5-5-5z" fill="#1c3c78" />
            </svg>
          </QuickAccess>
          <Title>Bundle Commander for ZENworks Configuration Management 1.1.10.0</Title>
          <WindowGlyphs />
        </TitleBar>

        <Client>
          <Tabs>
            <Tab type="button" $active>
              <House />
              Home
            </Tab>
            <Tab type="button">
              <EnglLogo />
              ENGL
            </Tab>
            <Tab type="button">
              <Wand />
              Import Wizards
            </Tab>
          </Tabs>

          <Ribbon>
            <Group $grow={146}>
              <ConnectAction type="button">
                <ConnectIcon />
                Connect
              </ConnectAction>
              <GroupLabel>Connecti ...</GroupLabel>
            </Group>
            {groups.map((g) => (
              <RibbonGroup key={g.label} group={g} />
            ))}
          </Ribbon>

          <Panes>
            <Pane $grow={908}>
              <AddressBar>
                <DriveBox>
                  <DriveSelect aria-label="Drive" defaultValue="N">
                    <option>N</option>
                  </DriveSelect>
                  <NetDrive />
                  <Caret dir="down" />
                </DriveBox>
                <Address
                  aria-label="Local path"
                  defaultValue={"n:\\install\\Adobe Flash Player 11.4.402.267\\ActiveX"}
                />
                <PathTools before={9} />
              </AddressBar>
              <GridArea>
                <TableWrap>
                  <Table>
                    <colgroup>
                      <col style={{ width: "46%" }} />
                      <col style={{ width: 192 }} />
                      <col style={{ width: 154 }} />
                      <col />
                    </colgroup>
                    <thead>
                      <tr>
                        <HeadCell text="Name" />
                        <HeadCell text="Ext" />
                        <HeadCell text="Size" />
                        <HeadCell text="Date" filter={false} />
                      </tr>
                    </thead>
                    <tbody>
                      <Row $ink="#111">
                        <NameTd>
                          <NameCell>
                            <FolderUp />
                            ...
                          </NameCell>
                        </NameTd>
                        <Td />
                        <Td />
                        <Td />
                      </Row>
                      <Row $selected $ink="#2340a8">
                        <NameTd>
                          <NameCell>
                            <MsiFile />
                            install_flash_player_11_active_x.msi
                          </NameCell>
                        </NameTd>
                        <Td>msi</Td>
                        <Td>10639872</Td>
                        <Td>26-09-2012</Td>
                      </Row>
                    </tbody>
                  </Table>
                </TableWrap>
                <ScrollBar percent={68} />
              </GridArea>
              <Callout $l={170} $t={2} $w={518} $h={65} />
              <Callout $l={-5} $t={117} $r={0} $h={139} />
            </Pane>

            <ClippedPane $grow={1081}>
              <AddressBar $overrun>
                <Address aria-label="Bundle path" defaultValue="/Bundles" />
                <PathTools before={13} />
              </AddressBar>
              <GridArea $overrun>
                <TableWrap>
                  <Table>
                    <colgroup>
                      <col style={{ width: 37 }} />
                      <col style={{ width: "26%" }} />
                      <col style={{ width: 163 }} />
                      <col style={{ width: 166 }} />
                      <col style={{ width: 194 }} />
                      <col style={{ width: 224 }} />
                      <col />
                    </colgroup>
                    <thead>
                      <tr>
                        <Th $blank aria-label="Tree" />
                        <HeadCell text="Name" sort />
                        <HeadCell text="Version" />
                        <HeadCell text="Enabled" />
                        <HeadCell text="Subtype" sort />
                        <HeadCell text="Creation Date" />
                        <HeadCell text="C" filter={false} />
                      </tr>
                    </thead>
                    <tbody>
                      {bundleRows.map((name, i) => (
                        <Row key={name} $selected={i === 0} $ink="#000">
                          <TreeTd data-tree="">
                            <Branch $first={i === 0} $last={i === bundleRows.length - 1} />
                          </TreeTd>
                          <NameTd>
                            <NameCell>
                              {i === 0 ? <ParentFolder /> : <Folder size={28} />}
                              {name}
                            </NameCell>
                          </NameTd>
                          <Td />
                          <Td>
                            <Check type="checkbox" aria-label={`${name} enabled`} />
                          </Td>
                          <Td>Bundle Folder</Td>
                          <Td />
                          <Td />
                        </Row>
                      ))}
                    </tbody>
                  </Table>
                </TableWrap>
                <ScrollBar percent={63} />
              </GridArea>
            </ClippedPane>
          </Panes>

          <StatusBar>
            <span>{"n:\\install\\Adobe Flash Player 11.4.402.267\\ActiveX"}</span>
            <StatusEnd>
              Logged on to ZCM11SP2_ZONE as Administrator
              <svg width="20" height="24" viewBox="0 0 20 24" aria-hidden="true">
                <path d="M16 2h4v4h-4zM8 10h4v4H8zM16 10h4v4h-4zM0 18h4v4H0zM8 18h4v4H8zM16 18h4v4h-4z" fill="#56688c" />
              </svg>
            </StatusEnd>
          </StatusBar>
        </Client>

        <Orb type="button" aria-label="Application menu">
          <AppIcon />
        </Orb>

        <Dialog role="dialog" aria-labelledby="launch-title" onSubmit={(e) => e.preventDefault()}>
          <DialogHead>
            <DialogTitle id="launch-title">
              <AppIcon />
              Create Bundle or Launch selected File
            </DialogTitle>
            <WindowGlyphs light />
          </DialogHead>
          <DialogBody>
            <Choices aria-label="Action">
              <Choice>
                <Radio type="radio" name="action" defaultChecked />
                Create Bundle
              </Choice>
              <Choice>
                <Radio type="radio" name="action" />
                Launch File
              </Choice>
            </Choices>
            <DialogActions>
              <DialogButton type="submit" $default>
                Ok
              </DialogButton>
              <DialogButton type="button">Cancel</DialogButton>
            </DialogActions>
          </DialogBody>
        </Dialog>
      </Frame>
    </>
  );
}
